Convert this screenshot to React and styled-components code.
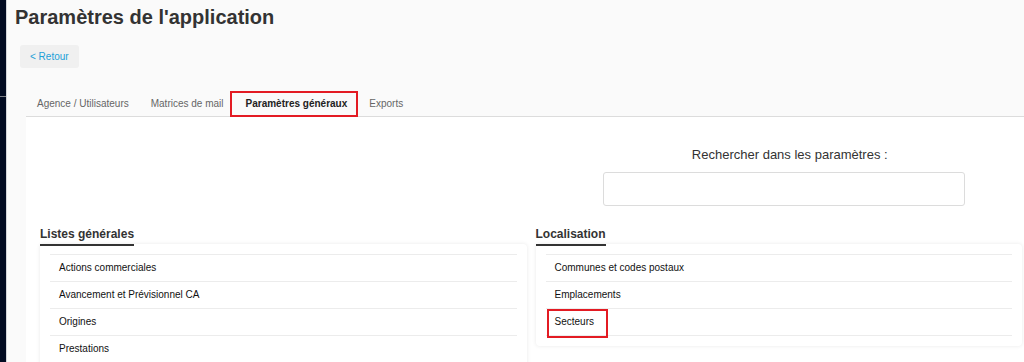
import React from "react";
import styled, { createGlobalStyle } from "styled-components";

const GlobalStyle = createGlobalStyle`
  html, body { margin: 0; padding: 0; }
  body {
    background: #fafafa;
    font-family: "Liberation Sans", Arial, sans-serif;
    color: #333;
  }
  *, *::before, *::after { box-sizing: border-box; }
`;

const Shell = styled.div`
  display: flex;
  min-height: 100vh;
`;

const Sidebar = styled.aside`
  width: 7px;
  flex: 0 0 7px;
  background: #020b22;
  border-right: 1px solid #d4d6da;
  padding-top: 96px;
`;

const SidebarRule = styled.div`
  height: 1px;
  background: #7d8087;
`;

const Main = styled.main`
  flex: 1;
  display: flex;
  flex-direction: column;
  min-width: 0;
`;

const Title = styled.h1`
  margin: 5px 0 0;
  padding-left: 8px;
  font-size: 20px;
  line-height: 24px;
  font-weight: 700;
  color: #333;
`;

const BackButton = styled.button`
  align-self: flex-start;
  margin: 16px 0 0 13px;
  height: 23px;
  padding: 0 10px 0 10px;
  border: none;
  border-radius: 3px;
  background: #f0f0f0;
  color: #1ca0d8;
  font-family: inherit;
  font-size: 10px;
  cursor: pointer;
`;

const TabBar = styled.nav`
  display: flex;
  margin: 23px 0 0 19px;
  border-bottom: 1px solid #dcdcdc;
`;

const Tab = styled.div`
  position: relative;
  height: 25px;
  line-height: 25px;
  padding: 0 11px;
  font-size: 10px;
  color: ${(p) => (p.$active ? "#222" : "#666")};
  font-weight: ${(p) => (p.$active ? 700 : 400)};
  white-space: nowrap;

  ${(p) =>
    p.$highlight &&
    `
    &::after {
      content: "";
      position: absolute;
      left: -5px;
      right: 0;
      top: 0;
      bottom: -1px;
      border: 2px solid #e31b23;
    }
  `}
`;

const Panel = styled.section`
  flex: 1;
  margin-left: 19px;
  background: #fff;
  padding: 30px 2px 0 14px;
  display: grid;
  grid-template-columns: 1fr 1fr;
  column-gap: 9px;
  align-content: start;
`;

const SearchCell = styled.div`
  grid-column: 2;
  padding: 0 57px 0 67px;
  display: flex;
  flex-direction: column;
`;

const SearchLabel = styled.label`
  font-size: 13px;
  line-height: 16px;
  color: #333;
  text-align: center;
  padding-left: 12px;
`;

const SearchInput = styled.input`
  margin-top: 9px;
  height: 34px;
  border: 1px solid #dcdcdc;
  border-radius: 3px;
  background: #fff;
  padding: 0 8px;
  font-family: inherit;
  font-size: 12px;
  outline: none;
`;

const Column = styled.div`
  margin-top: 21px;
  display: flex;
  flex-direction: column;
  align-items: flex-start;
`;

const SectionTitle = styled.h2`
  margin: 0;
  font-size: 12px;
  line-height: 14px;
  font-weight: 700;
  color: #333;
  padding-bottom: 3px;
  border-bottom: 2px solid #333;
  position: relative;
  z-index: 1;
`;

const Card = styled.div`
  align-self: stretch;
  margin-top: -2px;
  background: #fff;
  border-radius: 4px;
  box-shadow: 0 0 4px rgba(0, 0, 0, 0.09);
  padding: 10px 10px 10px;
`;

const Row = styled.div`
  position: relative;
  height: 27px;
  line-height: 26px;
  padding-left: 9px;
  border-top: 1px solid #ececec;
  font-size: 10px;
  color: #111;
  cursor: pointer;

  &:last-child {
    border-bottom: 1px solid #ececec;
    height: 28px;
  }

  ${(p) =>
    p.$highlight &&
    `
    &::after {
      content: "";
      position: absolute;
      left: 1px;
      top: 0;
      width: 61px;
      height: 29px;
      border: 2px solid #e31b23;
    }
  `}
`;

const tabs = [
  { label: "Agence / Utilisateurs" },
  { label: "Matrices de mail" },
  { label: "Paramètres généraux", active: true, highlight: true },
  { label: "Exports" },
];

const generalLists = [
  "Actions commerciales",
  "Avancement et Prévisionnel CA",
  "Origines",
  "Prestations",
];

const locations = [
  { label: "Communes et codes postaux" },
  { label: "Emplacements" },
  { label: "Secteurs", highlight: true },
];

export default function App() {
  return (
    <>
      <GlobalStyle />
      <Shell>
        <Sidebar>
          <SidebarRule />
        </Sidebar>
        <Main>
          <Title>Paramètres de l'application</Title>
          <BackButton>&lt; Retour</BackButton>
          <TabBar>
            {tabs.map((t) => (
              <Tab key={t.label} $active={t.active} $highlight={t.highlight}>
                {t.label}
              </Tab>
            ))}
          </TabBar>
          <Panel>
            <SearchCell>
              <SearchLabel htmlFor="search">Rechercher dans les paramètres :</SearchLabel>
              <SearchInput id="search" type="text" />
            </SearchCell>
            <Column>
              <SectionTitle>Listes générales</SectionTitle>
              <Card>
                {generalLists.map((item) => (
                  <Row key={item}>{item}</Row>
                ))}
              </Card>
            </Column>
            <Column>
              <SectionTitle>Localisation</SectionTitle>
              <Card>
                {locations.map((item) => (
                  <Row key={item.label} $highlight={item.highlight}>
                    {item.label}
                  </Row>
                ))}
              </Card>
            </Column>
          </Panel>
        </Main>
      </Shell>
    </>
  );
}
